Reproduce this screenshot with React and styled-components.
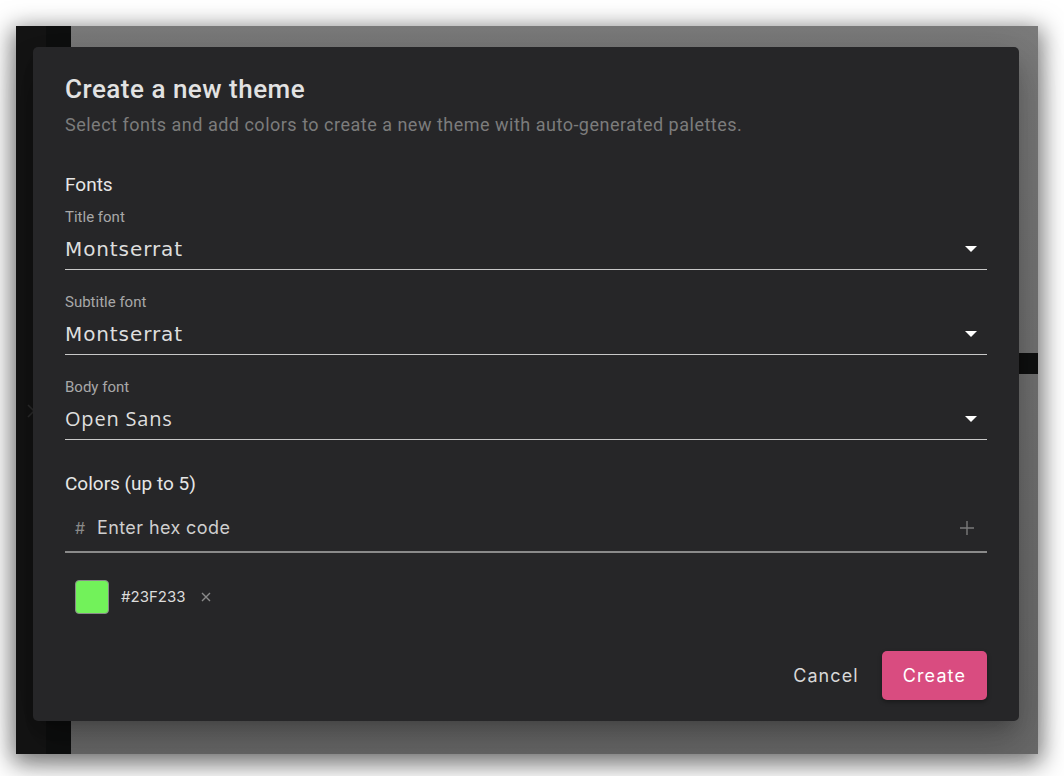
import styled, { createGlobalStyle } from 'styled-components';

const GlobalStyle = createGlobalStyle`
  html, body {
    margin: 0;
    padding: 0;
    background: #ffffff;
  }
  body {
    font-family: Roboto, "Liberation Sans", sans-serif;
  }
`;

const Page = styled.div`
  width: 1064px;
  height: 776px;
  padding: 26px 0 0 16px;
  box-sizing: border-box;
  overflow: hidden;
`;

const Frame = styled.div`
  position: relative;
  width: 1022px;
  height: 728px;
  display: grid;
  grid-template-columns: 30px 25px 1fr;
  box-shadow: 0 6px 22px 4px rgba(0, 0, 0, 0.5);
`;

const Rail = styled.div`
  background: ${(p) => p.$tone};
  display: flex;
  justify-content: center;
  padding-top: 378px;
`;

const Backdrop = styled.div`
  background: linear-gradient(#7b7b7b, #707070 60%, #6a6a6a);
  display: flex;
  flex-direction: column;
  align-items: flex-end;
`;

const Thumb = styled.div`
  margin-top: 327px;
  width: 19px;
  height: 21px;
  background: #0f1010;
`;

const Dialog = styled.div`
  position: absolute;
  left: 17px;
  top: 21px;
  width: 986px;
  height: 674px;
  box-sizing: border-box;
  padding: 24px 32px 21px;
  background: #262628;
  border-radius: 5px;
  display: flex;
  flex-direction: column;
  box-shadow: 0 11px 15px -7px rgba(0, 0, 0, 0.2), 0 24px 38px 3px rgba(0, 0, 0, 0.14),
    0 9px 46px 8px rgba(0, 0, 0, 0.12);
`;

const Title = styled.h2`
  margin: 0;
  font-size: 26px;
  line-height: 36px;
  font-weight: 500;
  letter-spacing: 0.5px;
  color: #e2e2e2;
`;

const Subtitle = styled.p`
  margin: 6px 0 0;
  font-size: 18px;
  line-height: 24px;
  color: #7c7c7c;
  letter-spacing: 0.5px;
`;

const Section = styled.h3`
  margin: ${(p) => p.$top}px 0 0;
  font-size: 19px;
  line-height: 24px;
  font-weight: 400;
  color: #e6e6e6;
`;

const Field = styled.div`
  margin-top: ${(p) => p.$top}px;
  display: flex;
  flex-direction: column;
  gap: 8px;
`;

const Label = styled.span`
  font-size: 15px;
  line-height: 20px;
  color: #a8a8a8;
`;

const Select = styled.div`
  display: flex;
  align-items: center;
  justify-content: space-between;
  padding: 0 10px 6px 0;
  border-bottom: 1px solid #c8c8c8;
`;

const Value = styled.span`
  font-family: ${(p) => p.$font};
  font-size: 20px;
  line-height: 28px;
  letter-spacing: ${(p) => p.$spacing}px;
  color: #dedede;
`;

const Caret = styled.span`
  width: 0;
  height: 0;
  border-left: 6px solid transparent;
  border-right: 6px solid transparent;
  border-top: 6px solid #ffffff;
`;

const HexInput = styled.div`
  margin-top: 20px;
  display: flex;
  align-items: center;
  padding: 0 13px 11px 10px;
  border-bottom: 2px solid #8a8a8a;
  font-family: Inter, "Liberation Sans", sans-serif;
`;

const Hash = styled.span`
  font-size: 16px;
  line-height: 24px;
  color: #8a8a8a;
  width: 22px;
`;

const Placeholder = styled.span`
  flex: 1;
  font-size: 18px;
  line-height: 24px;
  letter-spacing: 0.4px;
  color: #cfcfcf;
`;

const Chips = styled.div`
  margin-top: 27px;
  display: flex;
  align-items: center;
  gap: 12px;
  padding-left: 10px;
  font-family: Inter, "Liberation Sans", sans-serif;
`;

const Swatch = styled.span`
  width: 32px;
  height: 32px;
  border-radius: 4px;
  border: 1px solid #8a8a8a;
  background: ${(p) => p.$color};
`;

const ChipText = styled.span`
  font-size: 15px;
  line-height: 20px;
  color: #dcdcdc;
  margin-right: 4px;
`;

const Actions = styled.div`
  margin-top: auto;
  display: flex;
  justify-content: flex-end;
  align-items: center;
  gap: 7px;
`;

const Button = styled.button`
  font-family: Inter, "Liberation Sans", sans-serif;
  font-size: 18px;
  letter-spacing: 1.1px;
  height: 49px;
  padding: 0 ${(p) => (p.$primary ? 21 : 16)}px;
  border: none;
  border-radius: 5px;
  color: ${(p) => (p.$primary ? '#ffffff' : '#d8d8d8')};
  background: ${(p) => (p.$primary ? '#d94c80' : 'transparent')};
  box-shadow: ${(p) => (p.$primary ? '0 2px 4px rgba(0,0,0,0.35)' : 'none')};
`;

const fields = [
  { label: 'Title font', value: 'Montserrat', font: '"DejaVu Sans", sans-serif', spacing: 0.9, top: 10 },
  { label: 'Subtitle font', value: 'Montserrat', font: '"DejaVu Sans", sans-serif', spacing: 0.9, top: 22 },
  { label: 'Body font', value: 'Open Sans', font: '"Open Sans", sans-serif', spacing: 0.8, top: 22 },
];

export default function App() {
  return (
    <>
      <GlobalStyle />
      <Page>
        <Frame>
          <Rail $tone="#141414">
            <svg width="10" height="14" viewBox="0 0 10 14">
              <path d="M2 1l6 6-6 6" fill="none" stroke="#2c2c2c" strokeWidth="1.6" />
            </svg>
          </Rail>
          <Rail $tone="#0e0f0f" />
          <Backdrop>
            <Thumb />
          </Backdrop>
          <Dialog>
            <Title>Create a new theme</Title>
            <Subtitle>Select fonts and add colors to create a new theme with auto-generated palettes.</Subtitle>
            <Section $top={36}>Fonts</Section>
            {fields.map((f) => (
              <Field key={f.label} $top={f.top}>
                <Label>{f.label}</Label>
                <Select>
                  <Value $font={f.font} $spacing={f.spacing}>
                    {f.value}
                  </Value>
                  <Caret />
                </Select>
              </Field>
            ))}
            <Section $top={32}>Colors (up to 5)</Section>
            <HexInput>
              <Hash>#</Hash>
              <Placeholder>Enter hex code</Placeholder>
              <svg width="14" height="14" viewBox="0 0 14 14">
                <path d="M7 0v14M0 7h14" stroke="#7a7a7a" strokeWidth="1.4" />
              </svg>
            </HexInput>
            <Chips>
              <Swatch $color="#72f25a" />
              <ChipText>#23F233</ChipText>
              <svg width="10" height="10" viewBox="0 0 10 10">
                <path d="M1 1l8 8M9 1l-8 8" stroke="#8a8a8a" strokeWidth="1.4" />
              </svg>
            </Chips>
            <Actions>
              <Button>Cancel</Button>
              <Button $primary>Create</Button>
            </Actions>
          </Dialog>
        </Frame>
      </Page>
    </>
  );
}
